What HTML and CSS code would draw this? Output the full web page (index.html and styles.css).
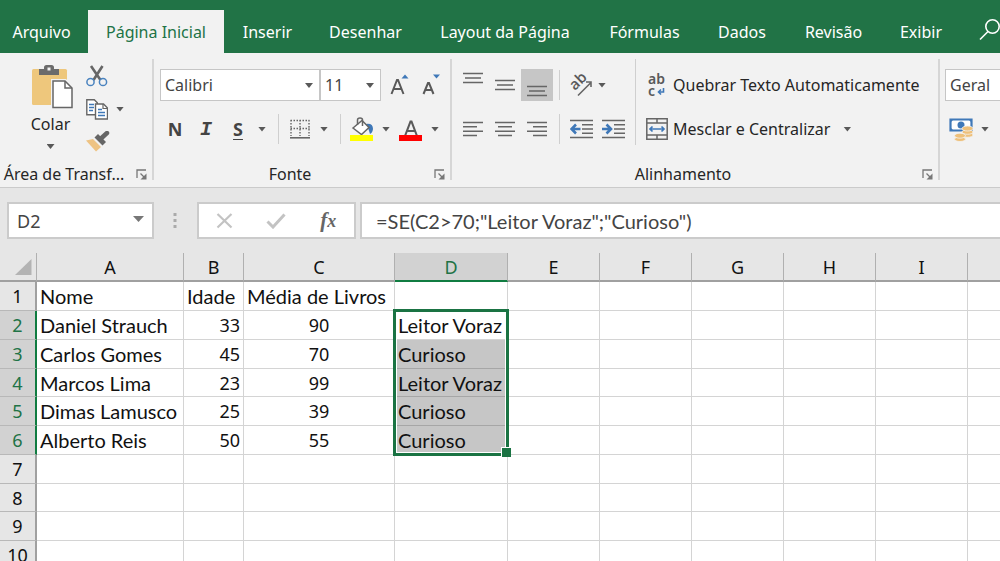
FILE: index.html
```html
<!DOCTYPE html>
<html lang="pt-BR">
<head>
<meta charset="utf-8">
<meta name="viewport" content="width=device-width, initial-scale=1">
<title>Planilha</title>
<link rel="stylesheet" href="styles.css">
</head>
<body>
<svg class="defs" aria-hidden="true">
  <symbol id="launcher" viewBox="0 0 11 11"><path d="M1 9V1h9M4.500 4.500l4 4" fill="none" stroke="#777" stroke-width="1.300"/><path d="M10.500 4.500v6h-6z" fill="#777"/></symbol>
</svg>
<div class="app">
  <nav class="tabs" aria-label="Guias">
    <button class="tab">Arquivo</button>
    <button class="tab active">Página Inicial</button>
    <button class="tab">Inserir</button>
    <button class="tab">Desenhar</button>
    <button class="tab">Layout da Página</button>
    <button class="tab">Fórmulas</button>
    <button class="tab">Dados</button>
    <button class="tab">Revisão</button>
    <button class="tab">Exibir</button>
    <button class="tab search" aria-label="Pesquisar"><svg width="24" height="24" viewBox="0 0 24 24" fill="none" stroke="#fff" stroke-width="1.600"><circle cx="13.500" cy="8.500" r="6.700"/><path d="M9 13.500L1 21.500"/></svg></button>
  </nav>

  <div class="ribbon">
    <section class="group clipboard" aria-label="Área de Transferência">
      <div class="clip-body">
        <button class="paste">
          <svg width="42" height="44" viewBox="0 0 42 44"><rect x="0" y="4" width="35" height="36" rx="1.500" fill="#eec77c"/><path d="M7 4h5V2.500Q12 0 14.500 0h5Q22 0 22 2.500V4h5v6H7z" fill="#6b6b6b"/><rect x="15.500" y="2.500" width="3" height="3" fill="#f2f2f2"/><path d="M19 14h15l8 8v22H19z" fill="#f2f2f2"/><path d="M21 16h12l7 7v19.500H21z" fill="#fff" stroke="#666" stroke-width="1.500"/><path d="M33 16v7h7" fill="none" stroke="#666" stroke-width="1.500"/></svg>
          <span>Colar</span>
          <i class="caret"></i>
        </button>
        <div class="clip-tools">
          <button class="tool" aria-label="Recortar"><svg width="22" height="22" viewBox="0 0 22 22" fill="none"><path d="M5 1l9.500 14M16.500 1L7.500 15" stroke="#666" stroke-width="2.600"/><circle cx="4.500" cy="17" r="3.600" stroke="#4a83bf" stroke-width="1.500"/><circle cx="17" cy="17" r="3.600" stroke="#4a83bf" stroke-width="1.500"/></svg></button>
          <button class="tool copy" aria-label="Copiar"><svg width="22" height="22" viewBox="0 0 22 22"><path d="M.8 1.800h7.500l3 3v12H.8z" fill="#fff" stroke="#666" stroke-width="1.400"/><path d="M3 6.500h5M3 9.500h5M3 12.500h4" stroke="#3f78b8" stroke-width="1.300"/><path d="M9.500 6h8l4 4v11h-12z" fill="#fff" stroke="#666" stroke-width="1.400"/><path d="M17 6v4.500h4.500" fill="none" stroke="#666" stroke-width="1.200"/><path d="M12 11.500h4M12 14.500h7M12 17.500h7" stroke="#3f78b8" stroke-width="1.300"/></svg><i class="caret"></i></button>
          <button class="tool" aria-label="Pincel de Formatação"><svg width="24" height="22" viewBox="0 0 24 22"><path d="M0 9.500l7-1.500 8 8-5 4.500z" fill="#eec383"/><path d="M8.500 6.500l3.500-3.500 8 8-3.500 3.500z" fill="#666"/><path d="M15 7.500L21 2" stroke="#666" stroke-width="4.500" stroke-linecap="round"/></svg></button>
        </div>
      </div>
      <footer class="group-label"><span>Área de Transf...</span><button class="launch" aria-label="Opções da Área de Transferência"><svg width="11" height="11"><use href="#launcher"/></svg></button></footer>
    </section>

    <section class="group font" aria-label="Fonte">
      <div class="rows">
        <div class="row">
          <span class="combo font-name"><select aria-label="Fonte"><option>Calibri</option></select></span>
          <span class="combo font-size"><select aria-label="Tamanho da fonte"><option>11</option></select></span>
          <button class="tool grow" aria-label="Aumentar fonte"><svg width="20" height="22" viewBox="0 0 20 22"><path d="M1.500 20L7 6h1l5.500 14M3.500 15h8" fill="none" stroke="#595959" stroke-width="2"/><path d="M11.500 4.500L15 .5l3.500 4z" fill="#3f78b8"/></svg></button>
          <button class="tool shrink" aria-label="Diminuir fonte"><svg width="20" height="22" viewBox="0 0 20 22"><path d="M1.500 20L6 9h1l4.500 11M3 16h7" fill="none" stroke="#595959" stroke-width="2"/><path d="M11 .5L14.500 4.500l3.500-4z" fill="#3f78b8"/></svg></button>
        </div>
        <div class="row font-row">
          <button class="tool letter bold">N</button>
          <button class="tool letter italic">I</button>
          <button class="tool letter under">S</button>
          <button class="tool" aria-label="Opções de sublinhado"><i class="caret"></i></button>
          <i class="rule"></i>
          <button class="tool" aria-label="Bordas"><svg width="20" height="20" viewBox="0 0 20 20" fill="none" stroke="#666"><path d="M.5 1.500h19M.5 9.500h19M1 1v16M10 1v16M19 1v16" stroke-width="1.400" stroke-dasharray="1.500 1.500"/><path d="M0 18.800h20" stroke-width="1.600"/></svg></button>
          <button class="tool" aria-label="Opções de bordas"><i class="caret"></i></button>
          <i class="rule"></i>
          <button class="tool" aria-label="Cor de preenchimento"><svg width="24" height="24" viewBox="0 0 24 24"><path d="M16 7q7-1 7 5-.5 4-3 5-1-4-4-10z" fill="#3f78b8"/><path d="M3 11l9-7.500 7 7L11.500 17.500z" fill="#fff" stroke="#666" stroke-width="1.500"/><path d="M7.500 8V3Q7.500 1 10 1t2.500 2v6" fill="none" stroke="#666" stroke-width="1.500"/><path d="M0 18h23v6H0z" fill="#ff0"/></svg></button>
          <button class="tool" aria-label="Opções de preenchimento"><i class="caret"></i></button>
          <button class="tool" aria-label="Cor da fonte"><svg width="24" height="24" viewBox="0 0 24 24"><path d="M6 19L11.500 4.500h1L18 19M8 14h8" fill="none" stroke="#595959" stroke-width="2.100"/><path d="M0 18h23v6H0z" fill="red"/></svg></button>
          <button class="tool" aria-label="Opções de cor da fonte"><i class="caret"></i></button>
        </div>
      </div>
      <footer class="group-label"><span>Fonte</span><button class="launch" aria-label="Opções de Fonte"><svg width="11" height="11"><use href="#launcher"/></svg></button></footer>
    </section>

    <section class="group alignment" aria-label="Alinhamento">
      <div class="align-body">
        <div class="rows">
          <div class="row align-row">
            <button class="tool top" aria-label="Alinhar em cima"><svg width="21" height="12" viewBox="0 0 21 12" stroke="#666" stroke-width="1.600"><path d="M0 1.500h20M2 6h16M0 10.500h20"/></svg></button>
            <button class="tool" aria-label="Alinhar no meio"><svg width="21" height="12" viewBox="0 0 21 12" stroke="#666" stroke-width="1.600"><path d="M0 1.500h20M2 6h16M0 10.500h20"/></svg></button>
            <button class="tool bottom pressed" aria-label="Alinhar embaixo"><svg width="21" height="12" viewBox="0 0 21 12" stroke="#666" stroke-width="1.600"><path d="M0 1.500h20M2 6h16M0 10.500h20"/></svg></button>
            <i class="rule"></i>
            <button class="tool orient" aria-label="Orientação"><svg width="24" height="24" viewBox="0 0 24 24"><text x="6" y="18" transform="rotate(-45 6 18)" font-size="15" class="glyph">ab</text><path d="M9 22.500L22 9.500M17 9h5v5" fill="none" stroke="#666" stroke-width="1.600"/></svg><i class="caret"></i></button>
          </div>
          <div class="row align-row">
            <button class="tool" aria-label="Alinhar à esquerda"><svg width="21" height="16" viewBox="0 0 21 16" stroke="#666" stroke-width="1.600"><path d="M0 1.500h20M0 5.800h14M0 10.200h20M0 14.500h14"/></svg></button>
            <button class="tool" aria-label="Centralizar"><svg width="21" height="16" viewBox="0 0 21 16" stroke="#666" stroke-width="1.600"><path d="M0 1.500h20M3 5.800h14M0 10.200h20M3 14.500h14"/></svg></button>
            <button class="tool" aria-label="Alinhar à direita"><svg width="21" height="16" viewBox="0 0 21 16" stroke="#666" stroke-width="1.600"><path d="M0 1.500h20M6 5.800h14M0 10.200h20M6 14.500h14"/></svg></button>
            <i class="rule"></i>
            <button class="tool" aria-label="Diminuir recuo"><svg width="24" height="20" viewBox="0 0 24 20" fill="none" stroke="#666" stroke-width="1.600"><path d="M0 1.500h23M12 5.700h11M12 10h11M12 14.300h11M0 18.500h23"/><path d="M10.500 10H2M6 5.500L1.500 10 6 14.500" stroke="#3f78b8" stroke-width="2.600"/></svg></button>
            <button class="tool" aria-label="Aumentar recuo"><svg width="24" height="20" viewBox="0 0 24 20" fill="none" stroke="#666" stroke-width="1.600"><path d="M0 1.500h23M12 5.700h11M12 10h11M12 14.300h11M0 18.500h23"/><path d="M0 10h8M4.500 5.500L9 10l-4.500 4.500" stroke="#3f78b8" stroke-width="2.600"/></svg></button>
          </div>
        </div>
        <div class="rows wide">
          <div class="row"><button class="wide-tool"><span class="wrap-icon"><b>ab</b><b>c</b><svg width="8" height="9" viewBox="0 0 8 9"><path d="M6.500 1v4H1.500M4 2.500L1.500 5 4 7.500" fill="none" stroke="#3f78b8" stroke-width="1.600"/></svg></span><span>Quebrar Texto Automaticamente</span></button></div>
          <div class="row"><button class="wide-tool"><svg width="22" height="22" viewBox="0 0 22 22" fill="none" stroke="#666" stroke-width="1.500"><path d="M.8 .8h20.400v20.400H.8zM.8 5h20.400M.8 17h20.400M11 1v4M11 17v4"/><path d="M4 11h14M6.500 8.500L4 11l2.500 2.500M15.500 8.500L18 11l-2.500 2.500" stroke="#3f78b8" stroke-width="1.700"/></svg><span>Mesclar e Centralizar</span><i class="caret"></i></button></div>
        </div>
      </div>
      <footer class="group-label"><span>Alinhamento</span><button class="launch" aria-label="Opções de Alinhamento"><svg width="11" height="11"><use href="#launcher"/></svg></button></footer>
    </section>

    <section class="group number" aria-label="Número">
      <div class="rows">
        <div class="row"><span class="combo format"><select aria-label="Formato de número"><option>Geral</option></select></span></div>
        <div class="row"><button class="tool money" aria-label="Formato de contabilização"><svg width="25" height="25" viewBox="0 0 25 25"><path d="M1.500 2.500h21v11h-21z" fill="#fff" stroke="#3f78b8" stroke-width="2.200"/><path d="M1 2h4L1 6zM23 2h-4l4 4zM1 14h4l-4-4z" fill="#3f78b8"/><circle cx="12" cy="8" r="3.500" fill="#3f78b8"/><g fill="#eec07a" stroke="#f2f2f2" stroke-width=".8"><ellipse cx="18.500" cy="18" rx="5.500" ry="2.300"/><ellipse cx="18.500" cy="15" rx="5.500" ry="2.300"/><ellipse cx="18.500" cy="11.500" rx="5.500" ry="2.500"/><ellipse cx="11" cy="22.200" rx="5.500" ry="2.300"/><ellipse cx="11" cy="18.700" rx="5.500" ry="2.500"/></g></svg><i class="caret"></i></button></div>
      </div>
    </section>
  </div>

  <div class="formula-bar">
    <span class="combo name-box"><select aria-label="Caixa de nome"><option>D2</option></select></span>
    <svg class="grip" width="4" height="16" viewBox="0 0 4 16" fill="#aaa"><path d="M.5 0h3v3h-3zM.5 6h3v3h-3zM.5 12h3v3h-3z"/></svg>
    <div class="entry-tools">
      <button aria-label="Cancelar"><svg width="18" height="16" viewBox="0 0 18 16"><path d="M1.500 1l14 13.500M15.500 1l-14 13.500" stroke="#c3c3c3" stroke-width="2.200"/></svg></button>
      <button aria-label="Inserir"><svg width="20" height="16" viewBox="0 0 20 16"><path d="M1.500 8.500L7 14 18.500 1.500" fill="none" stroke="#c3c3c3" stroke-width="3"/></svg></button>
      <button class="fx" aria-label="Inserir função">f<sub>x</sub></button>
    </div>
    <input class="formula" aria-label="Barra de fórmulas" value='=SE(C2&gt;70;"Leitor Voraz";"Curioso")'>
  </div>

  <table class="sheet">
    <colgroup><col class="c-head"><col class="c-a"><col class="c-b"><col class="c-c"><col class="c-d"><col class="c-std"><col class="c-std"><col class="c-std"><col class="c-std"><col class="c-std"><col></colgroup>
    <thead>
      <tr><th class="corner"><svg width="18" height="18" viewBox="0 0 18 18"><path d="M17.500 1v16H1z" fill="#b3b3b3"/></svg></th><th>A</th><th>B</th><th>C</th><th class="on">D</th><th>E</th><th>F</th><th>G</th><th>H</th><th>I</th><th></th></tr>
    </thead>
    <tbody>
      <tr><th>1</th><td>Nome</td><td>Idade</td><td>Média de Livros</td><td></td><td></td><td></td><td></td><td></td><td></td><td></td></tr>
      <tr><th class="on">2</th><td>Daniel Strauch</td><td class="num">33</td><td class="num mid">90</td><td class="anchor">Leitor Voraz<span class="selection"></span></td><td></td><td></td><td></td><td></td><td></td><td></td></tr>
      <tr><th class="on">3</th><td>Carlos Gomes</td><td class="num">45</td><td class="num mid">70</td><td class="picked">Curioso</td><td></td><td></td><td></td><td></td><td></td><td></td></tr>
      <tr><th class="on">4</th><td>Marcos Lima</td><td class="num">23</td><td class="num mid">99</td><td class="picked">Leitor Voraz</td><td></td><td></td><td></td><td></td><td></td><td></td></tr>
      <tr><th class="on">5</th><td>Dimas Lamusco</td><td class="num">25</td><td class="num mid">39</td><td class="picked">Curioso</td><td></td><td></td><td></td><td></td><td></td><td></td></tr>
      <tr><th class="on">6</th><td>Alberto Reis</td><td class="num">50</td><td class="num mid">55</td><td class="picked">Curioso</td><td></td><td></td><td></td><td></td><td></td><td></td></tr>
      <tr><th>7</th><td></td><td></td><td></td><td></td><td></td><td></td><td></td><td></td><td></td><td></td></tr>
      <tr><th>8</th><td></td><td></td><td></td><td></td><td></td><td></td><td></td><td></td><td></td><td></td></tr>
      <tr><th>9</th><td></td><td></td><td></td><td></td><td></td><td></td><td></td><td></td><td></td><td></td></tr>
      <tr><th>10</th><td></td><td></td><td></td><td></td><td></td><td></td><td></td><td></td><td></td><td></td></tr>
    </tbody>
  </table>
</div>
</body>
</html>
```
FILE: styles.css
```css
* { box-sizing: border-box; }
body { margin: 0; background: #e6e6e6; color: #262626; font: 16px "Noto Sans", "Open Sans", sans-serif; }
button, select, input { margin: 0; padding: 0; border: 0; background: none; color: inherit; font: inherit; }
svg { display: block; flex: none; }
.defs { position: absolute; width: 0; height: 0; }
.app { height: 100vh; overflow: hidden; }

/* Tabs */
.tabs { display: grid; grid-template-columns: 88px 136px 87px 109px 170px 109px 86px 97px 78px 1fr; height: 53px; padding-top: 10px; background: #217346; color: #fff; overflow: hidden; }
.tab { white-space: nowrap; }
.tab:first-child { padding-right: 5px; }
.tab.active { background: #f2f2f2; color: #217346; }
.search { padding: 0 0 4px 19px; }

/* Ribbon */
.ribbon { display: flex; padding: 6px 0 7px; background: #f2f2f2; border-bottom: 1px solid #cbcbcb; overflow: hidden; }
.group { display: flex; flex: none; flex-direction: column; justify-content: space-between; height: 121px; border-right: 2px solid #d6d6d6; }
.clipboard { width: 154px; }
.font { width: 298px; }
.alignment { width: 488px; }
.number { flex: 1; min-width: 60px; border-right: 0; }
.group-label { display: flex; line-height: 12px; text-align: center; white-space: nowrap; }
.group-label span { flex: 1; }
.launch { width: 24px; padding-left: 8px; }
.rows { display: grid; gap: 12px; padding-top: 10px; }
.row { display: flex; height: 32px; }
.tool { display: flex; align-items: center; justify-content: center; }
.caret { flex: none; width: 8px; height: 5px; background: #595959; clip-path: polygon(0 0, 100% 0, 50% 100%); }
.rule { justify-self: center; width: 1px; margin: 1px 0; background: #cfcfcf; }

.clip-body { display: flex; gap: 9px; padding: 6px 0 0 24px; }
.paste { display: flex; flex-direction: column; align-items: center; width: 53px; line-height: 24px; }
.paste svg { margin: 0 0 3px 5px; }
.paste .caret { margin-top: 8px; }
.clip-tools { display: grid; gap: 11px; align-content: start; justify-items: start; }
.copy { gap: 8px; }

.font .rows { padding-left: 6px; }
.combo { position: relative; display: flex; background: #fff; border: 1px solid #c6c6c6; color: #444; }
.combo select { flex: 1; width: 100%; padding-left: 4px; appearance: none; outline: 0; }
.combo::after { content: ""; position: absolute; top: 13px; right: 6px; width: 8px; height: 5px; background: #595959; clip-path: polygon(0 0, 100% 0, 50% 100%); pointer-events: none; }
.font-name { width: 160px; }
.font-size { width: 61px; }
.grow { margin-left: 9px; }
.shrink { margin-left: 12px; }
.font-row { display: grid; grid-template-columns: 30px 32px 32px 16px 16px 28px 20px 12px 32px 16px 34px 14px; }
.letter { color: #444; font-size: 18px; font-weight: 700; }
.italic { font-family: "Liberation Mono", monospace; font-size: 20px; font-style: italic; }
.under { text-decoration: underline; text-underline-offset: 3px; }

.align-body { display: flex; }
.align-body .rows { padding-left: 5px; }
.align-row { display: grid; grid-template-columns: 32px 32px 32px 13px 32px 32px; }
.top { align-items: flex-start; padding-top: 3px; }
.bottom { align-items: flex-end; padding-bottom: 4px; }
.pressed { background: #c6c6c6; }
.orient { grid-column: span 2; justify-content: flex-start; gap: 5px; padding-left: 3px; }
.orient svg { overflow: visible; }
.glyph { fill: #595959; font-family: "Open Sans", sans-serif; font-weight: 600; }
.align-body .wide { margin-left: 5px; padding-left: 10px; border-left: 1px solid #cfcfcf; }
.wide-tool { display: flex; align-items: center; gap: 5px; white-space: nowrap; }
.wide-tool .caret { margin-left: 8px; }
.wrap-icon { display: grid; grid-template-columns: 9px 13px; align-items: center; padding-left: 2px; width: 22px; color: #595959; font-size: 14px; line-height: 12px; text-align: left; }
.wrap-icon b { font-weight: 600; }
.wrap-icon b:first-child { grid-column: span 2; }

.number .rows { padding-left: 5px; }
.format { flex: 1; min-width: 150px; }
.money { gap: 7px; padding-left: 4px; }

/* Formula bar */
.formula-bar { display: flex; align-items: center; height: 65px; padding: 0 0 0 7px; font-size: 18px; color: #444; }
.formula-bar .combo, .entry-tools, .formula { height: 37px; background: #fff; border: 2px solid #cbcbcb; }
.name-box { width: 147px; }
.formula-bar .name-box select { padding-left: 8px; }
.name-box::after { top: 12px; right: 8px; width: 11px; height: 6px; background: #777; }
.grip { margin: 0 20px 0 19px; }
.entry-tools { display: grid; grid-template-columns: 1fr 1fr 1fr; width: 159px; }
.entry-tools button { display: flex; align-items: center; justify-content: center; }
.fx { color: #666; font: italic 700 21px "Liberation Serif", serif; }
.fx sub { font-size: 18px; line-height: 1; }
.formula-bar .formula { flex: 1; min-width: 0; margin-left: 4px; padding-left: 14px; border-right: 0; outline: 0; font-family: Lato, "Open Sans", sans-serif; font-size: 20px; }

/* Sheet */
.sheet { width: 100%; table-layout: fixed; border-spacing: 0; font-family: Lato, "Open Sans", sans-serif; font-size: 20px; color: #111; }
.c-head { width: 37px; }
.c-a { width: 147px; }
.c-b { width: 60px; }
.c-c { width: 151px; }
.c-d { width: 113px; }
.c-std { width: 92px; }
.sheet tr { height: 29px; }
.sheet tbody tr:nth-child(4n) { height: 28px; }
.sheet th, .sheet td { padding: 0; line-height: 24px; white-space: nowrap; }
.sheet th { background: #e6e6e6; border-right: 1px solid #b0b0b0; border-bottom: 1px solid #b8b8b8; font-family: "Noto Sans", "Open Sans", sans-serif; font-size: 18px; font-weight: 400; }
.sheet thead th { border-bottom: 2px solid #a0a0a0; }
.sheet tbody th { border-right: 2px solid #a0a0a0; }
.sheet th.on { background: #d2d2d2; color: #217346; }
.sheet thead th.on { border-bottom-color: #107c41; }
.sheet tbody th.on { border-right-color: #107c41; }
.corner svg { margin-left: 14px; }
.sheet td { padding: 0 3px; background: #fff; border-right: 1px solid #d4d4d4; border-bottom: 1px solid #d4d4d4; }
.sheet tr > :last-child { border-right: 0; }
.sheet .num { font-family: "Noto Sans", "Open Sans", sans-serif; font-size: 18px; text-align: right; }
.sheet .mid { text-align: center; }
.sheet .picked { background: #c6c6c6; border-bottom-color: #a6a6a6; }
.anchor { position: relative; }
.selection { position: absolute; top: -2px; left: -2px; width: calc(100% + 4px); height: 147px; border: 3px solid #1a7343; box-shadow: inset 0 0 0 1px #fff; pointer-events: none; }
.selection::after { content: ""; position: absolute; right: -5px; bottom: -4px; width: 9px; height: 9px; background: #1a7343; border: 1px solid #fff; border-width: 1px 0 0 1px; }
```
